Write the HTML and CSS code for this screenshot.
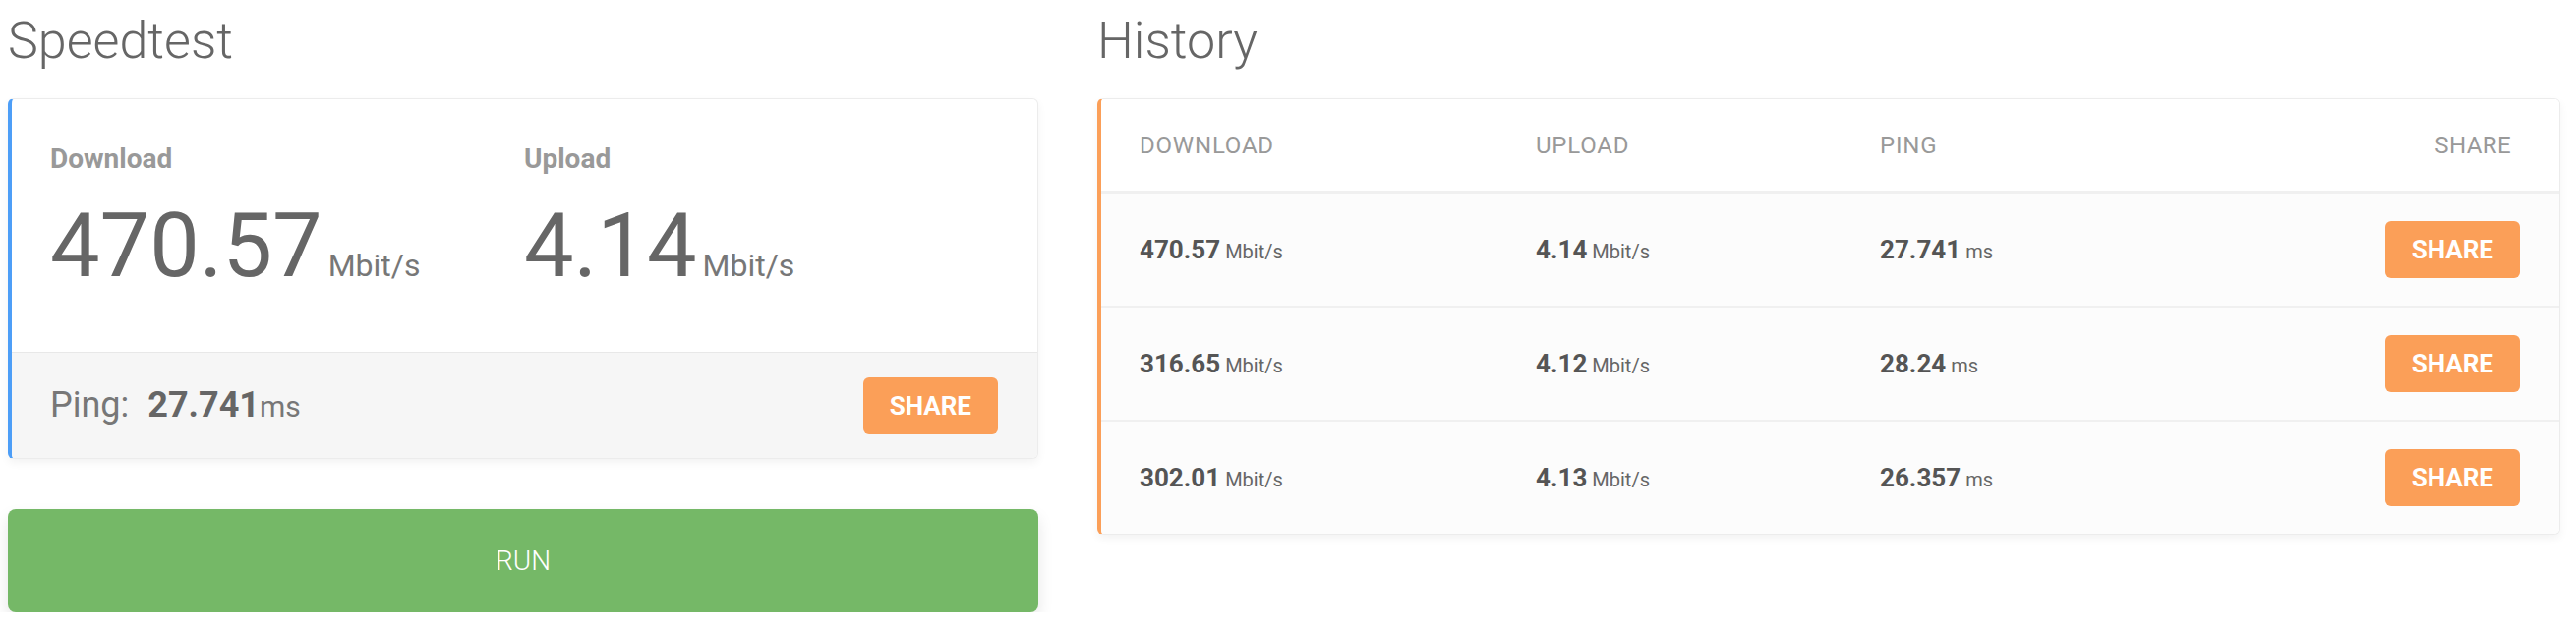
FILE: index.html
```html
<!DOCTYPE html>
<html lang="en">
<head>
<meta charset="utf-8">
<title>Speedtest</title>
<link rel="stylesheet" href="styles.css">
</head>
<body>
<div class="page">
  <section class="col">
    <h1 class="title">Speedtest</h1>
    <div class="card card-blue">
      <div class="result-body">
        <div class="metric">
          <div class="metric-label">Download</div>
          <div class="metric-value"><span class="num">470.57</span><span class="unit">Mbit/s</span></div>
        </div>
        <div class="metric">
          <div class="metric-label">Upload</div>
          <div class="metric-value"><span class="num">4.14</span><span class="unit">Mbit/s</span></div>
        </div>
      </div>
      <div class="result-foot">
        <div class="ping"><span class="ping-label">Ping:</span><span class="ping-num">27.741</span><span class="ping-unit">ms</span></div>
        <button class="btn-share">SHARE</button>
      </div>
    </div>
    <button class="btn-run">RUN</button>
  </section>
  <section class="col">
    <h1 class="title">History</h1>
    <div class="card card-orange">
      <div class="h-row h-head">
        <div>DOWNLOAD</div>
        <div>UPLOAD</div>
        <div>PING</div>
        <div class="h-share">SHARE</div>
      </div>
      <div class="h-row h-item">
        <div class="cell"><b>470.57</b><span class="u">Mbit/s</span></div>
        <div class="cell"><b>4.14</b><span class="u">Mbit/s</span></div>
        <div class="cell"><b>27.741</b><span class="u">ms</span></div>
        <button class="btn-share">SHARE</button>
      </div>
      <div class="h-row h-item">
        <div class="cell"><b>316.65</b><span class="u">Mbit/s</span></div>
        <div class="cell"><b>4.12</b><span class="u">Mbit/s</span></div>
        <div class="cell"><b>28.24</b><span class="u">ms</span></div>
        <button class="btn-share">SHARE</button>
      </div>
      <div class="h-row h-item">
        <div class="cell"><b>302.01</b><span class="u">Mbit/s</span></div>
        <div class="cell"><b>4.13</b><span class="u">Mbit/s</span></div>
        <div class="cell"><b>26.357</b><span class="u">ms</span></div>
        <button class="btn-share">SHARE</button>
      </div>
    </div>
  </section>
</div>
</body>
</html>
```
FILE: styles.css
```css
* { box-sizing: border-box; }
body {
  margin: 0;
  background: #fff;
  font-family: Roboto, "Liberation Sans", Arial, sans-serif;
}
.page {
  display: grid;
  grid-template-columns: 1048px 1488px;
  column-gap: 60px;
  padding: 0 8px;
  align-items: start;
}
.title {
  margin: 11px 0 27px;
  font-size: 52px;
  line-height: 62px;
  font-weight: 300;
  color: #666;
}
.card {
  background: #fff;
  border: 1px solid #ececec;
  border-radius: 6px;
  box-shadow: 0 4px 10px rgba(0, 0, 0, 0.05);
  overflow: hidden;
}
.card-blue { border-left: 4px solid #4d9ef7; }
.card-orange { border-left: 4px solid #fb9f58; }

.result-body {
  display: grid;
  grid-template-columns: 1fr 1fr;
  padding: 47px 40px 62px 39px;
  border-bottom: 1px solid #e8e8e8;
}
.metric-label {
  font-size: 28px;
  line-height: 28px;
  font-weight: 700;
  color: #999;
  margin-bottom: 30px;
}
.metric-value {
  display: flex;
  align-items: baseline;
  height: 90px;
}
.num {
  font-size: 90px;
  line-height: 90px;
  color: #666;
}
.unit {
  font-size: 32px;
  line-height: 32px;
  color: #777;
  margin-left: 6px;
}
.result-foot {
  display: flex;
  justify-content: space-between;
  align-items: center;
  height: 107px;
  padding: 0 40px 0 39px;
  background: #f6f6f6;
}
.ping {
  display: flex;
  align-items: baseline;
  font-size: 36px;
  line-height: 36px;
  color: #777;
}
.ping-num {
  font-weight: 700;
  color: #666;
  margin-left: 19px;
}
.ping-unit {
  font-size: 30px;
  color: #777;
}
.btn-share {
  background: #fb9f58;
  color: #fff;
  border: 0;
  border-radius: 6px;
  height: 58px;
  padding: 0 27px;
  font-family: Roboto, "Liberation Sans", Arial, sans-serif;
  font-size: 26px;
  line-height: 58px;
  font-weight: 700;
}
.btn-run {
  display: block;
  width: 100%;
  margin-top: 51px;
  height: 105px;
  background: #75b867;
  color: #fff;
  border: 0;
  border-radius: 8px;
  font-family: Roboto, "Liberation Sans", Arial, sans-serif;
  font-size: 28px;
  font-weight: 300;
  box-shadow: 0 8px 16px rgba(0, 0, 0, 0.1);
}

.h-row {
  display: grid;
  grid-template-columns: 403px 350px 1fr auto;
  align-items: center;
  padding: 0 40px 0 39px;
}
.h-head {
  height: 96px;
  border-bottom: 3px solid #f0f0f0;
  background: #fff;
  font-size: 24px;
  line-height: 24px;
  letter-spacing: 0.8px;
  color: #999;
}
.h-share {
  justify-self: end;
  padding-right: 9px;
  letter-spacing: 0.4px;
}
.h-item {
  height: 116px;
  background: #fcfcfc;
  border-bottom: 2px solid #f0f0f0;
}
.h-item:last-child { border-bottom: 0; height: 114px; }
.cell {
  display: flex;
  align-items: baseline;
  font-size: 26px;
  color: #555;
}
.cell b { font-weight: 700; }
.cell .u {
  font-size: 20px;
  color: #666;
  margin-left: 5px;
}
```
